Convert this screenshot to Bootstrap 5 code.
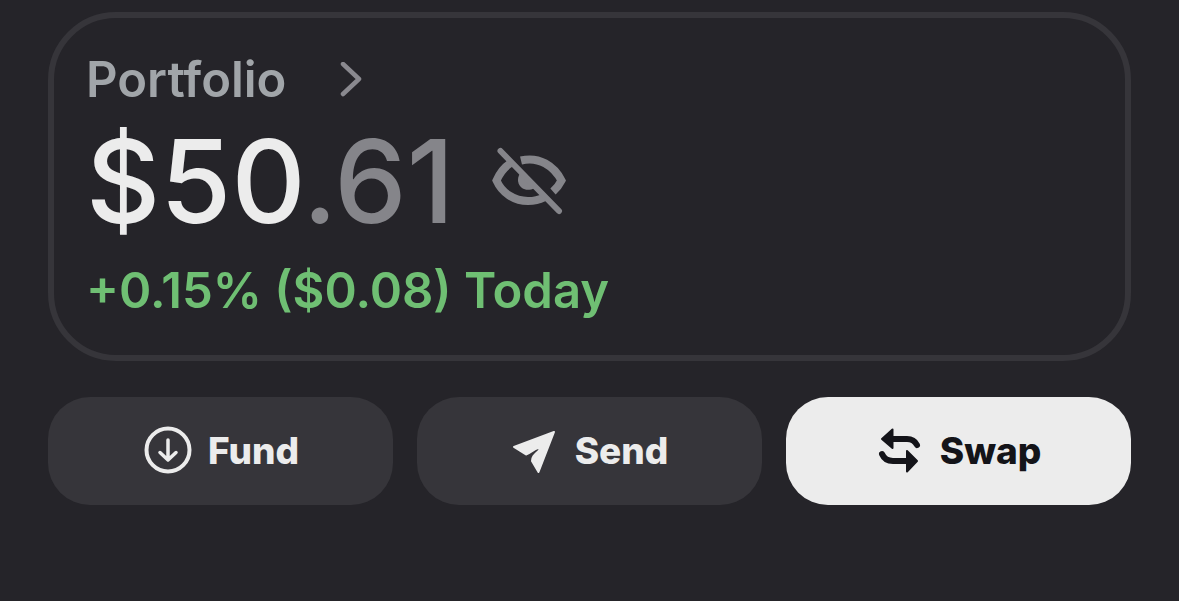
<!DOCTYPE html>
<html lang="en">
<head>
<meta charset="utf-8">
<meta name="viewport" content="width=device-width, initial-scale=1">
<title>Portfolio</title>
<link href="https://cdn.jsdelivr.net/npm/bootstrap@5.3.0/dist/css/bootstrap.min.css" rel="stylesheet">
<style>
  body { background: #252429; color: #ececec; font-family: Inter, "Liberation Sans", sans-serif; }
  .wallet { padding: 12px 48px 48px; }
  .balance-card { --bs-card-bg: transparent; --bs-card-color: #ececec; border: 6px solid #36353a; border-radius: 68px; padding: 32px 32px 34px; margin-bottom: 36px; }
  .portfolio-link { color: #a1a5a9; font-size: 49px; font-weight: 600; line-height: 60px; gap: 53px; }
  .portfolio-link svg { color: #8a898f; }
  .balance-row { gap: 36px; margin-bottom: 7px; }
  .amount { font-size: 115px; font-weight: 500; line-height: 144px; }
  .cents, .toggle-balance { color: #85858a; }
  .change { color: #6fbf73; font-size: 49px; font-weight: 600; line-height: 60px; }
  .action { --bs-btn-color: #ececec; --bs-btn-bg: #36353a; --bs-btn-hover-color: #ececec; --bs-btn-hover-bg: #414046; --bs-btn-border-width: 0; --bs-btn-border-radius: 42px; height: 108px; font-size: 37px; font-weight: 800; line-height: 44px; gap: 16px; }
  .action-light { --bs-btn-color: #141419; --bs-btn-bg: #ececec; --bs-btn-hover-color: #141419; --bs-btn-hover-bg: #fff; }
</style>
</head>
<body>
<main class="wallet">
  <section class="card balance-card align-items-start">
    <a href="#" class="portfolio-link d-inline-flex align-items-center text-decoration-none">Portfolio
      <svg width="24" height="36" viewBox="0 0 24 36" fill="none" stroke="currentColor" stroke-width="4.500" stroke-linecap="round" stroke-linejoin="round" aria-hidden="true"><path d="M4 2 20 17 4 32"/></svg>
    </a>
    <div class="balance-row d-flex align-items-center">
      <div class="amount">$50<span class="cents">.61</span></div>
      <button type="button" class="btn toggle-balance border-0 p-0" aria-label="Hide balance">
        <svg class="d-block" width="76" height="70" viewBox="0 0 76 70" fill="none" stroke="currentColor" stroke-width="8" aria-hidden="true">
          <path d="M20 16.500C14 20.500 9.500 26.500 6.500 33.500C12 46 24 54 38 54C44 54 49 53 54 50.500"/>
          <path d="M31 13.500C49 9 64 19 71.500 33.500C69.500 37.500 67 41 63 44.500"/>
          <path d="M31.500 24.500C23 33.500 31 48 45 41Z" fill="currentColor" stroke="none"/>
          <path d="M10.500 4 69 64" stroke-width="6" stroke-linecap="round"/>
        </svg>
      </button>
    </div>
    <div class="change">+0.15% ($0.08) Today</div>
  </section>

  <div class="d-flex gap-4">
    <button type="button" class="btn action flex-fill w-100 d-flex align-items-center justify-content-center">
      <svg width="50" height="50" viewBox="0 0 50 50" fill="none" stroke="currentColor" stroke-width="4" stroke-linecap="round" stroke-linejoin="round" aria-hidden="true"><circle cx="26" cy="24" r="21.500"/><path d="M26 14V33M18 26.500 26 34 34 26.500" stroke-width="3.500"/></svg>
      Fund
    </button>
    <button type="button" class="btn action flex-fill w-100 d-flex align-items-center justify-content-center">
      <svg width="48" height="48" viewBox="0 0 48 48" fill="currentColor" stroke="currentColor" stroke-width="2" stroke-linejoin="round" aria-hidden="true"><path d="M43 5 3 20 15 27.500C20 25.500 23 22 27 21Q30 22 27 24.500C23 28 21 30 21 34L27.500 45Z"/></svg>
      Send
    </button>
    <button type="button" class="btn action action-light flex-fill w-100 d-flex align-items-center justify-content-center">
      <svg width="48" height="48" viewBox="0 0 48 48" fill="none" stroke="currentColor" stroke-width="6" stroke-linecap="round" stroke-linejoin="round" aria-hidden="true"><path d="M16 12H31Q38 12 41 18M32 34H17Q9 34 6 27"/><path d="M6 12 16.500 2.500V21ZM41 34 31 24V44.500Z" fill="currentColor" stroke-width="2"/></svg>
      Swap
    </button>
  </div>
</main>
<script src="https://cdn.jsdelivr.net/npm/bootstrap@5.3.0/dist/js/bootstrap.bundle.min.js"></script>
</body>
</html>
